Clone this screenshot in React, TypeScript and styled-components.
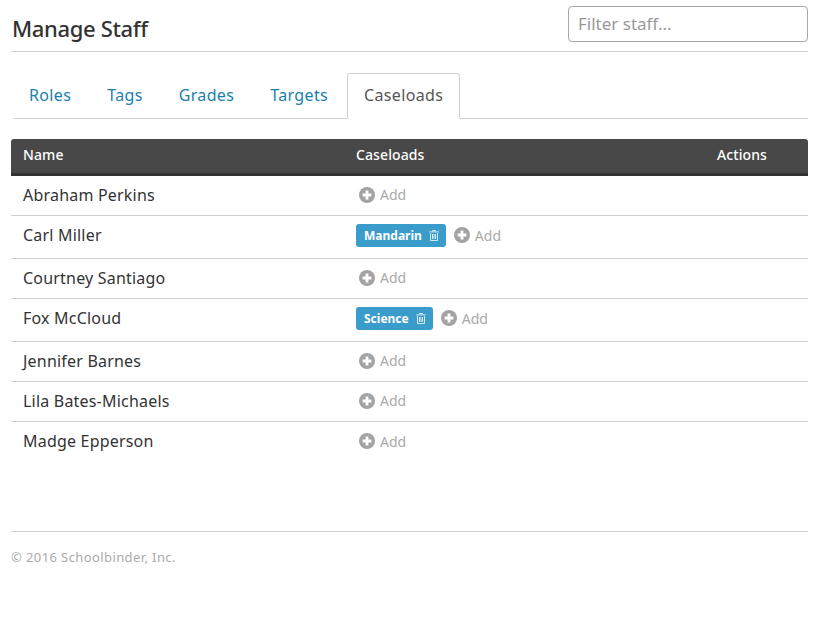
import * as React from "react";
import styled, { createGlobalStyle } from "styled-components";

type StaffRow = {
  name: string;
  caseload?: string;
};

const TABS = ["Roles", "Tags", "Grades", "Targets", "Caseloads"];

const STAFF: StaffRow[] = [
  { name: "Abraham Perkins" },
  { name: "Carl Miller", caseload: "Mandarin" },
  { name: "Courtney Santiago" },
  { name: "Fox McCloud", caseload: "Science" },
  { name: "Jennifer Barnes" },
  { name: "Lila Bates-Michaels" },
  { name: "Madge Epperson" },
];

const PlusIcon = () => (
  <svg width="16" height="16" viewBox="0 0 16 16" aria-hidden="true">
    <circle cx="8" cy="8" r="8" fill="#a3a3a3" />
    <path d="M8 3.6v8.8M3.6 8h8.8" stroke="#fff" strokeWidth="2.8" />
  </svg>
);

const TrashIcon = () => (
  <svg width="10" height="11" viewBox="0 0 10 11" aria-hidden="true">
    <path
      d="M3.5 1.4V.5h3v.9M.2 1.9h9.6M1.5 3v7.5h7V3M3.5 4v5M5 4v5M6.5 4v5"
      fill="none"
      stroke="#d5ebf6"
      strokeWidth="1"
    />
  </svg>
);

export default function App() {
  return (
    <>
      <GlobalStyle />
      <Page>
        <Header>
          <Title>Manage Staff</Title>
          <Filter placeholder="Filter staff..." />
        </Header>

        <Tabs>
          {TABS.map((tab) => (
            <Tab key={tab} $active={tab === "Caseloads"}>
              {tab}
            </Tab>
          ))}
        </Tabs>

        <Table>
          <HeadRow>
            <span>Name</span>
            <span>Caseloads</span>
            <span>Actions</span>
          </HeadRow>
          {STAFF.map((row) => (
            <Row key={row.name} $tall={!!row.caseload}>
              <Name>{row.name}</Name>
              <Caseloads>
                {row.caseload && (
                  <Label>
                    {row.caseload}
                    <TrashIcon />
                  </Label>
                )}
                <AddLink>
                  <PlusIcon />
                  Add
                </AddLink>
              </Caseloads>
            </Row>
          ))}
        </Table>

        <Footer>© 2016 Schoolbinder, Inc.</Footer>
      </Page>
    </>
  );
}

const GlobalStyle = createGlobalStyle`
  body {
    margin: 0;
    background: #fff;
    color: #333;
    font-family: "Noto Sans", "Open Sans", sans-serif;
  }
`;

const Page = styled.div`
  width: 797px;
  margin-left: 11px;
`;

const Header = styled.div`
  display: flex;
  justify-content: space-between;
  height: 52px;
  padding-top: 6px;
  box-sizing: border-box;
  border-bottom: 1px solid #d0d0d0;
`;

const Title = styled.h1`
  margin: 0;
  padding: 7px 0 0 1px;
  font-size: 22px;
  line-height: 30px;
  font-weight: 500;
  letter-spacing: -0.35px;
  color: #333;
`;

const Filter = styled.input`
  width: 240px;
  height: 36px;
  box-sizing: border-box;
  padding: 0 9px 2px;
  border: 1px solid #a8a8a8;
  border-radius: 4px;
  font-family: inherit;
  font-size: 17px;
  outline: none;
  &::placeholder {
    color: #999;
    opacity: 1;
  }
`;

const Tabs = styled.div`
  display: flex;
  align-items: flex-end;
  height: 46px;
  margin: 21px 0 20px 2px;
  box-sizing: border-box;
  border-bottom: 1px solid #d0d0d0;
`;

const Tab = styled.div<{ $active?: boolean }>`
  height: 46px;
  box-sizing: border-box;
  padding: 0 16px;
  margin-right: 2px;
  margin-bottom: -1px;
  line-height: 42px;
  font-size: 16px;
  letter-spacing: 0.35px;
  color: ${(props) => (props.$active ? "#555" : "#1a7fad")};
  background: ${(props) => (props.$active ? "#fff" : "transparent")};
  border: 1px solid ${(props) => (props.$active ? "#d0d0d0" : "transparent")};
  border-bottom-color: ${(props) => (props.$active ? "#fff" : "transparent")};
  border-radius: 3px 3px 0 0;
  &:first-child {
    margin-left: -1px;
  }
`;

const Table = styled.div`
  display: flex;
  flex-direction: column;
`;

const HeadRow = styled.div`
  display: grid;
  grid-template-columns: 333px 361px 1fr;
  align-items: center;
  height: 37px;
  padding: 0 12px 3px;
  box-sizing: border-box;
  background: #484848;
  border-bottom: 3px solid #333;
  border-radius: 3px 3px 0 0;
  color: #fff;
  font-size: 14px;
  font-weight: 500;
  letter-spacing: 0.1px;
`;

const Row = styled.div<{ $tall?: boolean }>`
  display: grid;
  grid-template-columns: 333px 1fr;
  align-items: center;
  height: ${(props) => (props.$tall ? "43px" : "40px")};
  padding: 0 12px ${(props) => (props.$tall ? "4px" : "2px")};
  box-sizing: border-box;
  border-bottom: 1px solid #d0d0d0;
  &:last-child {
    border-bottom: none;
  }
`;

const Name = styled.div`
  font-size: 16px;
  letter-spacing: 0.2px;
  color: #333;
`;

const Caseloads = styled.div`
  display: flex;
  align-items: center;
  gap: 8px;
`;

const Label = styled.span`
  display: inline-flex;
  align-items: center;
  gap: 7px;
  height: 23px;
  padding: 0 7px 0 8px;
  border-radius: 3px;
  background: #3a9ccb;
  color: #fff;
  font-size: 12px;
  font-weight: 700;
`;

const AddLink = styled.span`
  display: inline-flex;
  align-items: center;
  gap: 5px;
  margin-left: 3px;
  color: #aaa;
  font-size: 14px;
  &:not(:first-child) {
    margin-left: 0;
  }
`;

const Footer = styled.div`
  margin-top: 69px;
  padding-top: 16px;
  border-top: 1px solid #d0d0d0;
  color: #aaa;
  font-size: 13px;
  letter-spacing: 0.4px;
`;
